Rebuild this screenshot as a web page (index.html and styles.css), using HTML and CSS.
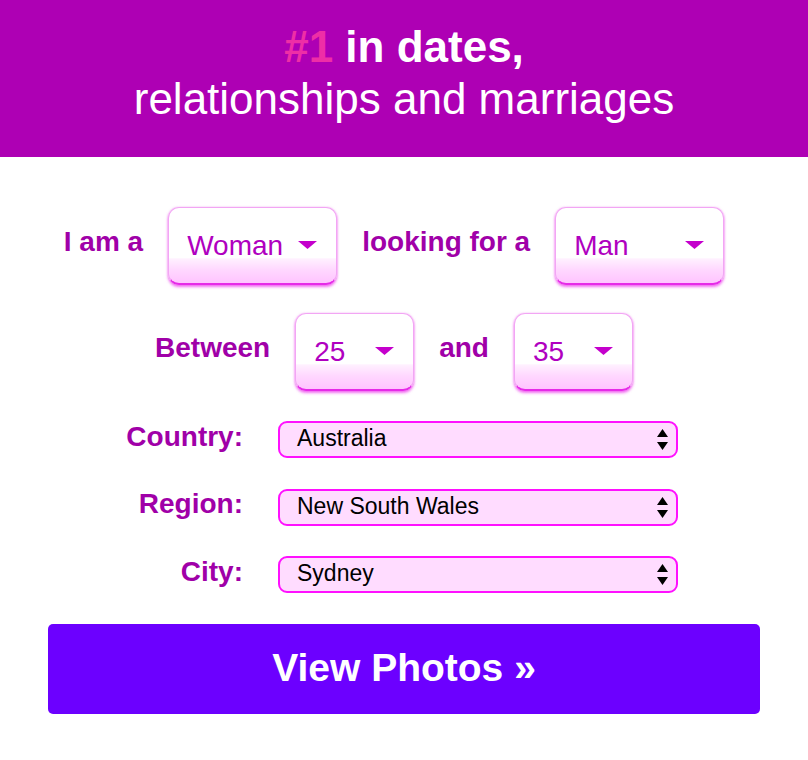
FILE: index.html
```html
<!DOCTYPE html>
<html lang="en">
<head>
<meta charset="utf-8">
<title>#1 in dates</title>
<link rel="stylesheet" href="styles.css">
</head>
<body>
<header class="hero">
  <div class="hero-line hero-strong"><span class="hero-accent">#1</span> in dates,</div>
  <div class="hero-line">relationships and marriages</div>
</header>

<main class="form">
  <div class="pair-row">
    <span class="pair-label">I am a</span>
    <div class="big-select big-wide">
      <span>Woman</span>
      <svg class="caret" width="19" height="8" viewBox="0 0 19 8"><path d="M0 0H19L9.5 8Z"/></svg>
    </div>
    <span class="pair-label">looking for a</span>
    <div class="big-select big-wide">
      <span>Man</span>
      <svg class="caret" width="19" height="8" viewBox="0 0 19 8"><path d="M0 0H19L9.5 8Z"/></svg>
    </div>
  </div>

  <div class="pair-row">
    <span class="pair-label">Between</span>
    <div class="big-select big-narrow">
      <span>25</span>
      <svg class="caret" width="19" height="8" viewBox="0 0 19 8"><path d="M0 0H19L9.5 8Z"/></svg>
    </div>
    <span class="pair-label">and</span>
    <div class="big-select big-narrow">
      <span>35</span>
      <svg class="caret" width="19" height="8" viewBox="0 0 19 8"><path d="M0 0H19L9.5 8Z"/></svg>
    </div>
  </div>

  <div class="place-grid">
    <span class="place-label">Country:</span>
    <div class="place-select">
      <span>Australia</span>
      <svg class="updown" width="11" height="21" viewBox="0 0 11 21"><path d="M5.5 0L11 8H0Z M0 13H11L5.5 21Z"/></svg>
    </div>
    <span class="place-label">Region:</span>
    <div class="place-select">
      <span>New South Wales</span>
      <svg class="updown" width="11" height="21" viewBox="0 0 11 21"><path d="M5.5 0L11 8H0Z M0 13H11L5.5 21Z"/></svg>
    </div>
    <span class="place-label">City:</span>
    <div class="place-select">
      <span>Sydney</span>
      <svg class="updown" width="11" height="21" viewBox="0 0 11 21"><path d="M5.5 0L11 8H0Z M0 13H11L5.5 21Z"/></svg>
    </div>
  </div>

  <button class="cta" type="button">View Photos »</button>
</main>
</body>
</html>
```

FILE: styles.css
```css
* { box-sizing: border-box; }

html, body {
  margin: 0;
  padding: 0;
  background: #ffffff;
}

body {
  font-family: "Liberation Sans", Arial, Helvetica, sans-serif;
  width: 808px;
  height: 760px;
  overflow: hidden;
}

.hero {
  background: #ae00b4;
  color: #ffffff;
  text-align: center;
  height: 157px;
  padding-top: 21px;
  font-size: 44px;
  line-height: 52px;
}

.hero-strong {
  font-weight: bold;
}

.hero-accent {
  color: #ee2ea6;
}

.form {
  display: flex;
  flex-direction: column;
  padding-top: 50px;
}

.pair-row {
  display: flex;
  justify-content: center;
  align-items: center;
  padding-right: 20px;
  gap: 25px;
  margin-bottom: 28px;
}

.pair-row + .pair-row {
  margin-bottom: 30px;
}

.pair-label {
  font-size: 28px;
  font-weight: bold;
  color: #a000a8;
  padding-bottom: 8px;
  white-space: nowrap;
}

.big-select {
  height: 78px;
  display: flex;
  align-items: center;
  justify-content: space-between;
  padding: 0 19px 0 18px;
  font-size: 28px;
  color: #b000c0;
  border: 1px solid #f2a6f4;
  border-bottom: 2px solid #e62ae8;
  border-radius: 11px;
  background: linear-gradient(to bottom, #ffffff 0%, #ffffff 66%, #fff0ff 68%, #ffd8ff 82%, #ffc4ff 100%);
  box-shadow: 0 2px 3px rgba(232, 0, 232, 0.55), 0 0 2px rgba(240, 120, 240, 0.5);
}

.big-wide { width: 169px; }
.big-narrow { width: 119px; }

.caret {
  fill: #c400cc;
  flex: none;
  margin-top: -2px;
}

.place-grid {
  display: grid;
  grid-template-columns: 150px 400px;
  grid-auto-rows: 37px;
  column-gap: 35px;
  row-gap: 30.5px;
  padding-left: 93px;
  align-items: center;
}

.place-label {
  font-size: 28px;
  font-weight: bold;
  color: #a000a8;
  text-align: right;
  padding-bottom: 6px;
}

.place-select {
  height: 37px;
  display: flex;
  align-items: center;
  justify-content: space-between;
  padding: 0 8px 2px 17px;
  background: #ffdcff;
  border: 2px solid #ff10ff;
  border-radius: 9px;
  font-size: 23px;
  color: #000000;
}

.updown {
  fill: #000000;
  flex: none;
  margin-top: 2px;
}

.cta {
  margin: 31px 48px 0;
  height: 90px;
  border: none;
  border-radius: 5px;
  background: #6c00ff;
  color: #ffffff;
  font-family: "Liberation Sans", Arial, Helvetica, sans-serif;
  font-size: 39px;
  font-weight: bold;
  padding: 0 0 2px;
  cursor: pointer;
}
```
